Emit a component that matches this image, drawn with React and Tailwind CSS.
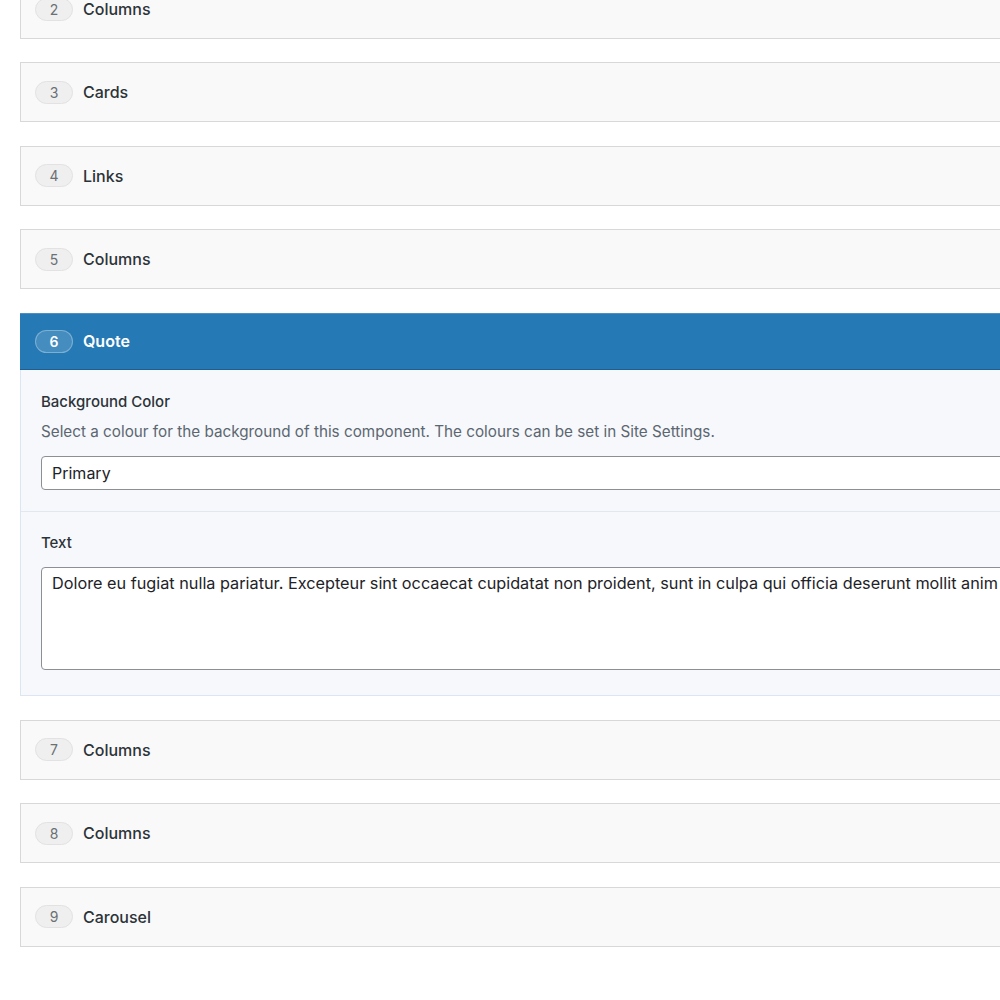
import React from 'react'

const FONT = { fontFamily: 'Inter, "Noto Sans", sans-serif' }

const blocks = [
    { n: 2, title: 'Columns' },
    { n: 3, title: 'Cards' },
    { n: 4, title: 'Links' },
    { n: 5, title: 'Columns' },
    { n: 6, title: 'Quote', open: true },
    { n: 7, title: 'Columns' },
    { n: 8, title: 'Columns' },
    { n: 9, title: 'Carousel' },
]

function Badge({ n, active }) {
    return (
        <span
            className={
                active
                    ? 'flex h-[23px] w-[38px] items-center justify-center rounded-full border border-white/30 bg-white/15 text-[14px] font-semibold text-white'
                    : 'flex h-[23px] w-[38px] items-center justify-center rounded-full border border-[#e2e2e2] bg-[#efefef] text-[14px] text-[#6b7075]'
            }
        >
            {n}
        </span>
    )
}

function ClosedBlock({ n, title }) {
    return (
        <div className="flex h-[60px] items-center gap-[10px] border border-[#d8d8d8] bg-[#f9f9f9] pl-[14px]">
            <Badge n={n} />
            <span className="text-[16px] font-medium text-[#2c3338]">{title}</span>
        </div>
    )
}

function OpenBlock({ n, title }) {
    return (
        <div className="mb-[1px]">
            <div className="flex h-[57px] items-center gap-[10px] border-y border-t-[#4a90c4] border-b-[#1d5f92] bg-[#2579b4] pl-[15px]">
                <Badge n={n} active />
                <span className="text-[16px] font-semibold text-white">{title}</span>
            </div>
            <div className="border-x border-b border-[#dce5f4] bg-[#f6f8fc]">
                <div className="border-b border-[#e3e8f0] px-5 pb-[21px] pt-[22px]">
                    <div className="text-[15px] font-medium leading-5 text-[#2c3338]">
                        Background Color
                    </div>
                    <div className="mt-[10px] text-[15.25px] leading-5 text-[#5c6670]">
                        Select a colour for the background of this component. The colours can be set in Site Settings.
                    </div>
                    <div className="mt-[14px] flex h-[34px] items-center rounded-[4px] border border-[#8c8f94] bg-white pl-[10px] text-[16px] text-[#1d2327]">
                        Primary
                    </div>
                </div>
                <div className="px-5 pb-[25px] pt-[21px]">
                    <div className="text-[15px] font-medium leading-5 text-[#2c3338]">Text</div>
                    <div className="mt-[14px] h-[103px] overflow-hidden rounded-[4px] border border-[#8c8f94] bg-white px-[10px] pt-[3px] text-[16.25px] leading-6 whitespace-nowrap text-[#1d2327]">
                        Dolore eu fugiat nulla pariatur. Excepteur sint occaecat cupidatat non proident, sunt in culpa qui officia deserunt mollit anim
                    </div>
                </div>
            </div>
        </div>
    )
}

export default function App() {
    return (
        <div className="h-[1000px] w-[1000px] overflow-hidden bg-white" style={FONT}>
            <div className="-mt-[21px] flex w-[1400px] flex-col gap-[23.4px] pl-5">
                {blocks.map((b) =>
                    b.open ? (
                        <OpenBlock key={b.n} n={b.n} title={b.title} />
                    ) : (
                        <ClosedBlock key={b.n} n={b.n} title={b.title} />
                    )
                )}
            </div>
        </div>
    )
}
